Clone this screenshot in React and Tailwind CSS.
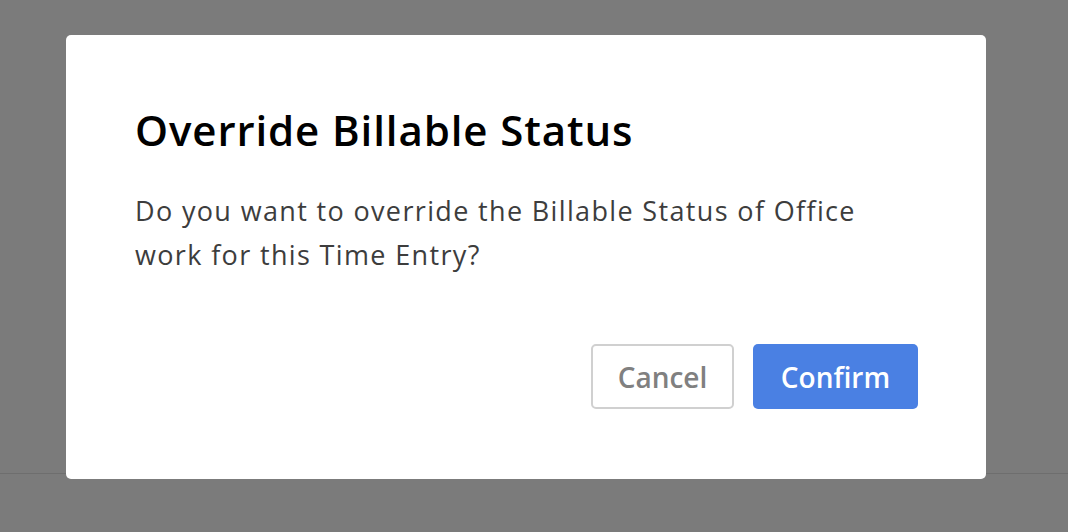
import React from 'react';

const App = () => {
  return (
    <div className="relative w-full h-[532px] overflow-hidden bg-[#7b7b7b]" style={{ fontFamily: '"Open Sans", sans-serif' }}>
      {/* Page behind the overlay */}
      <div className="h-[473px]" />
      <div className="border-t border-[#6e6e6e]" />

      {/* Dialog */}
      <div className="absolute left-[66px] top-[35px] w-[920px] h-[444px] bg-white rounded-[5px] pl-[69px] pr-[68px] pt-[66px] flex flex-col">
        <h2 className="text-[42px] leading-[57px] tracking-[0.9px] font-semibold text-black">Override Billable Status</h2>
        <p className="mt-[31px] max-w-[740px] text-[27px] leading-[44px] tracking-[1.35px] text-[#3d3d3d]">
          Do you want to override the Billable Status of Office work for this Time Entry?
        </p>
        <div className="mt-[67px] flex justify-end gap-[19px]">
          <button className="w-[143px] h-[65px] rounded-[5px] border-2 border-[#d0d0d0] bg-white text-[28px] font-semibold text-[#808080]">
            Cancel
          </button>
          <button className="w-[165px] h-[65px] rounded-[5px] bg-[#4a80e3] text-[28px] font-semibold text-white">
            Confirm
          </button>
        </div>
      </div>
    </div>
  );
};

export default App;
